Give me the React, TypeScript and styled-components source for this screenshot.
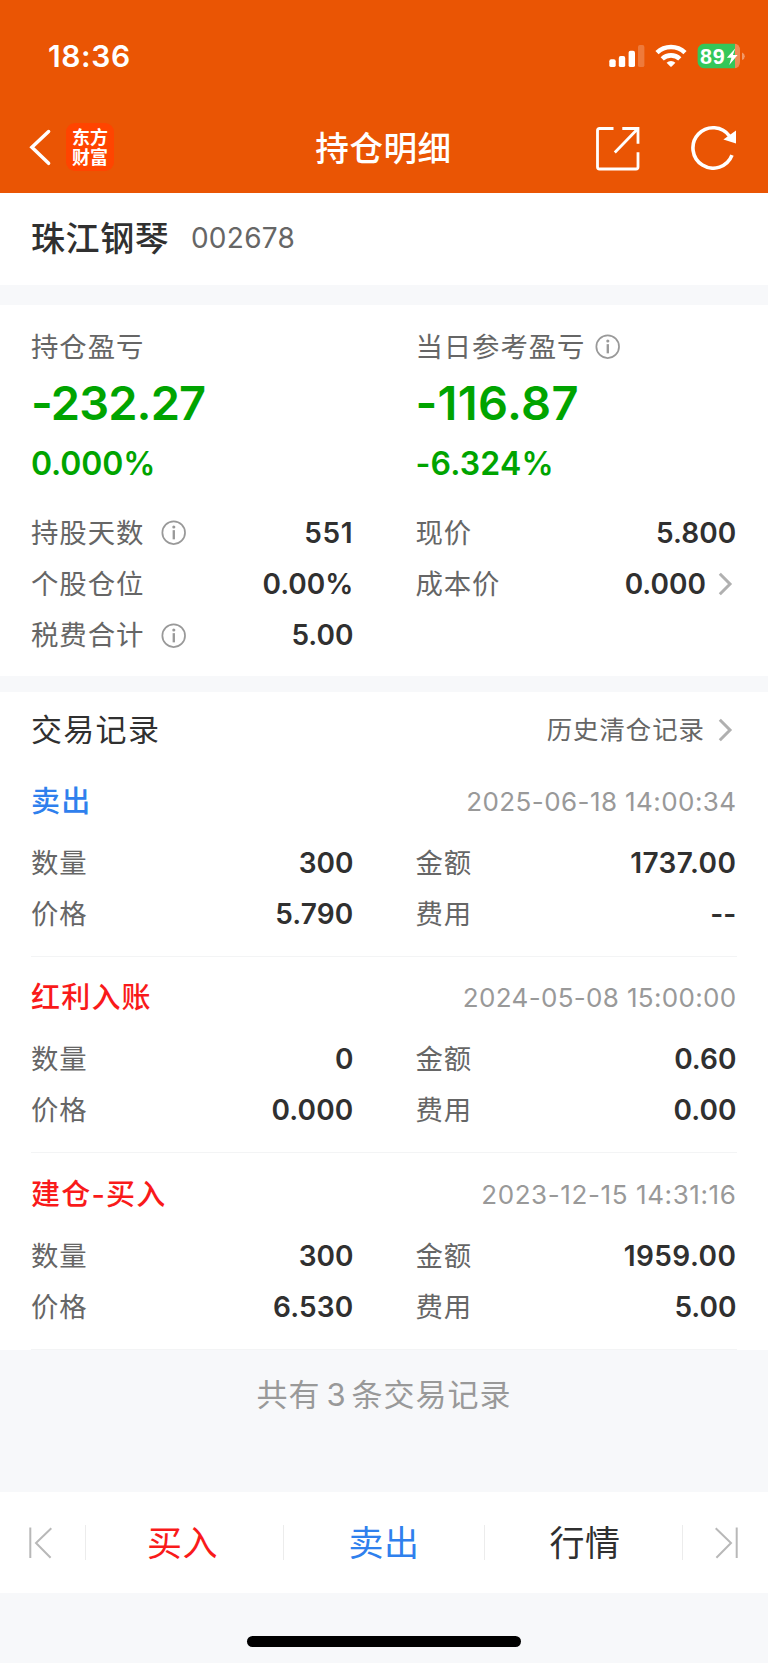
import React from "react";
import styled, { createGlobalStyle } from "styled-components";

const GlobalStyle = createGlobalStyle`
  * { box-sizing: border-box; }
  body {
    margin: 0;
    background: #f7f8fa;
    font-family: Inter, "Noto Sans CJK SC", sans-serif;
    color: #303030;
    -webkit-font-smoothing: antialiased;
  }
`;

const Page = styled.div`
  display: flex;
  flex-direction: column;
  width: 768px;
  height: 1663px;
  background: #f7f8fa;
  white-space: nowrap;
  overflow: hidden;
`;

const Header = styled.header`
  height: 192.5px;
  background: #ea5504;
  color: #fff;
`;

const StatusBar = styled.div`
  height: 102px;
  padding: 10px 24px 0 48px;
  display: flex;
  align-items: center;
  justify-content: space-between;
`;

const Clock = styled.span`
  font-size: 30px;
  font-weight: 600;
  letter-spacing: 0.6px;
`;

const NavBar = styled.nav`
  height: 90px;
  padding: 0 31px 0 28px;
  display: grid;
  grid-template-columns: 1fr auto 1fr;
  align-items: center;
`;

const NavLeft = styled.div`
  display: flex;
  align-items: center;
  gap: 12px;
`;

const NavRight = styled.div`
  display: flex;
  align-items: center;
  justify-content: flex-end;
  gap: 51px;
`;

const NavTitle = styled.h1`
  margin: 0;
  padding: 4px 0 0 2px;
  font-size: 33.6px;
  font-weight: 500;
  letter-spacing: 0.5px;
  line-height: 48px;
`;

const Logo = styled.div`
  width: 48px;
  height: 48px;
  padding: 5px 0 0 6px;
  border-radius: 9px;
  background: #ff4400;
  font-size: 18px;
  font-weight: 700;
  line-height: 19.5px;
`;

const StockBar = styled.section`
  height: 92.5px;
  padding: 0 31px;
  display: flex;
  align-items: center;
  gap: 21.5px;
  background: #fff;
`;

const StockName = styled.h2`
  margin: 0;
  font-size: 34px;
  font-weight: 500;
  letter-spacing: 0.6px;
  line-height: 50px;
`;

const StockCode = styled.span`
  padding-bottom: 1px;
  color: #666;
  font-size: 28px;
  letter-spacing: 0.3px;
  line-height: 49px;
`;

const Panel = styled.section<{ $top: number; $height: number }>`
  height: ${(p) => p.$height}px;
  margin-top: ${(p) => p.$top}px;
  padding: 0 31.5px 0 31px;
  background: #fff;
`;

const Columns = styled.div`
  display: grid;
  grid-template-columns: 322.4px 321px;
  column-gap: 62px;
`;

const Overview = styled(Columns)`
  padding: 18.5px 0 17.5px;
`;

const LabelLine = styled.div`
  height: 46px;
  display: flex;
  align-items: center;
  gap: 10px;
`;

const Amount = styled.div<{ $tracking: number }>`
  height: 68px;
  color: #00a400;
  font-size: 47px;
  font-weight: 600;
  letter-spacing: ${(p) => p.$tracking}px;
  line-height: 66px;
`;

const Percent = styled.div<{ $tracking: number }>`
  height: 52px;
  color: #00a400;
  font-size: 32px;
  font-weight: 600;
  letter-spacing: ${(p) => p.$tracking}px;
  line-height: 52px;
`;

const Field = styled.div`
  height: 51.3px;
  display: flex;
  align-items: center;
  justify-content: space-between;
`;

const FieldName = styled.span`
  display: flex;
  align-items: center;
  gap: 17px;
`;

const Label = styled.span`
  color: #666;
  font-size: 27.4px;
  letter-spacing: 0.95px;
  line-height: 40px;
`;

const Value = styled.span<{ $tracking: number }>`
  display: flex;
  align-items: center;
  font-size: 28px;
  font-weight: 600;
  letter-spacing: ${(p) => p.$tracking}px;
`;

const SectionHead = styled.div`
  height: 68px;
  padding-top: 7px;
  display: flex;
  align-items: center;
  justify-content: space-between;
`;

const SectionTitle = styled.h2`
  margin: 0;
  font-size: 31px;
  font-weight: 400;
  letter-spacing: 1.3px;
  line-height: 42px;
`;

const HistoryLink = styled.a`
  display: flex;
  align-items: center;
  color: #666;
`;

const HistoryText = styled.span`
  margin-right: 1px;
  font-size: 25.4px;
  letter-spacing: 1px;
  line-height: 36px;
`;

const Record = styled.article`
  height: 196.5px;
  padding-top: 6px;
  border-bottom: 1px solid #f3f4f5;
`;

const RecordHead = styled.div`
  height: 71px;
  display: flex;
  align-items: center;
  justify-content: space-between;
`;

const RecordType = styled.span<{ $color: string }>`
  color: ${(p) => p.$color};
  font-size: 29px;
  font-weight: 500;
  letter-spacing: 1.2px;
  line-height: 40px;
`;

const RecordTime = styled.time<{ $tracking: number }>`
  padding-bottom: 1px;
  color: #999;
  font-size: 26px;
  letter-spacing: ${(p) => p.$tracking}px;
`;

const Total = styled.p`
  height: 142.5px;
  margin: 0;
  color: #999;
  font-size: 31px;
  letter-spacing: 1px;
  line-height: 90px;
  text-align: center;
`;

const Count = styled.span`
  margin: 0 5px 0 6px;
`;

const ActionBar = styled.footer`
  height: 101px;
  display: grid;
  grid-template-columns: 86px 198px 201px 198px 85px;
  align-items: center;
  background: #fff;
`;

const Action = styled.button<{ $color: string; $nudge?: number }>`
  height: 35px;
  padding: 1px 0 0 ${(p) => p.$nudge ?? 0}px;
  border: 0;
  border-right: 1px solid #ececec;
  background: none;
  color: ${(p) => p.$color};
  font: 400 35px/35px Inter, "Noto Sans CJK SC", sans-serif;
  letter-spacing: 0.6px;
`;

const BuyAction = styled(Action)`
  padding-right: 4px;
`;

const EdgeButton = styled.button<{ $first?: boolean }>`
  height: 35px;
  padding: 0 ${(p) => (p.$first ? 33.5 : 0)}px 0 ${(p) => (p.$first ? 0 : 32)}px;
  display: flex;
  align-items: center;
  justify-content: ${(p) => (p.$first ? "flex-end" : "flex-start")};
  border: 0;
  border-right: ${(p) => (p.$first ? "1px solid #ececec" : "0")};
  background: none;
`;

const HomeArea = styled.div`
  height: 70px;
  padding-top: 43px;
  display: flex;
  justify-content: center;
`;

const HomeIndicator = styled.div`
  width: 274px;
  height: 10.5px;
  border-radius: 6px;
  background: #000;
`;

const StatusIcons = () => (
  <svg width="136" height="28" viewBox="608 42 136 28" fill="#fff" overflow="visible">
    <rect x="609.3" y="59.3" width="6.4" height="7.8" rx="1.9" />
    <rect x="618.8" y="56" width="6.4" height="11.1" rx="1.9" />
    <rect x="628.6" y="50.8" width="6.4" height="16.3" rx="1.9" />
    <rect x="638" y="45" width="6.4" height="22.1" rx="1.9" opacity="0.22" />
    <g fill="none" stroke="#fff" strokeWidth="4.6">
      <path d="M657 52.6 A20.2 20.2 0 0 1 685 52.6" />
      <path d="M662.2 58.9 A12.8 12.8 0 0 1 679.8 58.9" />
    </g>
    <path d="M666.6 62.8 A6.5 6.5 0 0 1 675.4 62.8 L671.7 66.5 Q671 67.1 670.3 66.5 Z" />
    <path d="M735 43.8 A5 6.2 0 0 1 740 50 V62 A5 6.2 0 0 1 735 68.2 Z" opacity="0.32" />
    <path d="M704 43.8 H735 V68.2 H704 A6.4 6.4 0 0 1 697.6 61.8 V50.2 A6.4 6.4 0 0 1 704 43.8 Z" fill="#34c759" />
    <path d="M742 52.4 Q744.8 53.4 744.8 56.2 Q744.8 59 742 60 Z" opacity="0.4" />
    <text x="700" y="63.7" fontSize="21.5" fontWeight="700" fontFamily="Liberation Sans, sans-serif" letterSpacing="0.9">
      89
    </text>
    <path d="M735.2 48.6 L726.8 57.8 H731.4 L729.2 65 L737.6 55 H732.9 Z" />
  </svg>
);

const BackIcon = () => (
  <svg width="26" height="40" viewBox="28 127 26 40" fill="none" stroke="#fff" strokeWidth="3.5" strokeLinecap="round">
    <path d="M48.6 131.5 L31.9 147.3 L48.6 163.3" />
  </svg>
);

const ShareIcon = () => (
  <svg width="44" height="48" viewBox="0 -4 44 48" fill="none" stroke="#fff" strokeWidth="2.8">
    <path d="M17.5 1.5 H3.5 Q1.5 1.5 1.5 3.5 V40 Q1.5 42 3.5 42 H40 Q42 42 42 40 V25.2" />
    <path d="M26.3 1.5 H42 V16.8 M42 1.5 L18.8 25.4" />
  </svg>
);

const RefreshIcon = () => (
  <svg width="46" height="46" viewBox="691 125 46 46">
    <path d="M732 156.2 A20.2 20.2 0 1 1 729.6 137.2" fill="none" stroke="#fff" strokeWidth="3.6" />
    <path d="M736 131.5 V144.6 L723.4 140.4 Z" fill="#fff" />
  </svg>
);

const InfoIcon = () => (
  <svg width="25.4" height="25.4" viewBox="0 0 26 26">
    <circle cx="13" cy="13" r="11.6" fill="none" stroke="#999" strokeWidth="1.8" />
    <rect x="11.9" y="10.4" width="2.4" height="9.4" fill="#999" />
    <circle cx="13.1" cy="7.2" r="1.6" fill="#999" />
  </svg>
);

const ArrowSlot = styled.svg`
  margin: 0 3.5px 0 12px;
`;

const Arrow = () => (
  <ArrowSlot width="15" height="24" viewBox="0 0 15 24" fill="none" stroke="#b0b0b0" strokeWidth="3">
    <path d="M1.8 1.8 L12 12 L1.8 22.2" />
  </ArrowSlot>
);

const EdgeIcon = ({ flip }: { flip?: boolean }) => (
  <svg width="23" height="32" viewBox="0 0 23 32" fill="none" stroke="#b8b8b8" strokeWidth="2">
    <g transform={flip ? "translate(23 0) scale(-1 1)" : undefined}>
      <path d="M1.3 0.5 V31" />
      <path d="M22.3 1.2 L7 16 L21.6 30.8" />
    </g>
  </svg>
);

type FieldProps = { name: string; value: string; info?: boolean; arrow?: boolean; tracking?: number };

const FieldRow = ({ name, value, info, arrow, tracking = 0 }: FieldProps) => (
  <Field>
    <FieldName>
      <Label>{name}</Label>
      {info && <InfoIcon />}
    </FieldName>
    <Value $tracking={tracking}>
      {value}
      {arrow && <Arrow />}
    </Value>
  </Field>
);

const records = [
  { type: "卖出", color: "#2f80ed", time: "2025-06-18 14:00:34", tracking: 0.42, count: "300", amount: "1737.00", price: "5.790", fee: "--" },
  { type: "红利入账", color: "#f91a1a", time: "2024-05-08 15:00:00", tracking: 0.33, count: "0", amount: "0.60", price: "0.000", fee: "0.00" },
  { type: "建仓-买入", color: "#f91a1a", time: "2023-12-15 14:31:16", tracking: 0.6, count: "300", amount: "1959.00", price: "6.530", fee: "5.00" },
];

export default function App() {
  return (
    <Page>
      <GlobalStyle />
      <Header>
        <StatusBar>
          <Clock>18:36</Clock>
          <StatusIcons />
        </StatusBar>
        <NavBar>
          <NavLeft>
            <BackIcon />
            <Logo>
              东方
              <br />
              财富
            </Logo>
          </NavLeft>
          <NavTitle>持仓明细</NavTitle>
          <NavRight>
            <ShareIcon />
            <RefreshIcon />
          </NavRight>
        </NavBar>
      </Header>

      <StockBar>
        <StockName>珠江钢琴</StockName>
        <StockCode>002678</StockCode>
      </StockBar>

      <Panel $top={20} $height={371}>
        <Overview>
          <div>
            <LabelLine>
              <Label>持仓盈亏</Label>
            </LabelLine>
            <Amount $tracking={-0.9}>-232.27</Amount>
            <Percent $tracking={-0.1}>0.000%</Percent>
          </div>
          <div>
            <LabelLine>
              <Label>当日参考盈亏</Label>
              <InfoIcon />
            </LabelLine>
            <Amount $tracking={0.35}>-116.87</Amount>
            <Percent $tracking={0.2}>-6.324%</Percent>
          </div>
        </Overview>
        <Columns>
          <FieldRow name="持股天数" value="551" tracking={0.7} info />
          <FieldRow name="现价" value="5.800" tracking={0.1} />
          <FieldRow name="个股仓位" value="0.00%" />
          <FieldRow name="成本价" value="0.000" arrow />
          <FieldRow name="税费合计" value="5.00" info />
        </Columns>
      </Panel>

      <Panel $top={16} $height={657.5}>
        <SectionHead>
          <SectionTitle>交易记录</SectionTitle>
          <HistoryLink>
            <HistoryText>历史清仓记录</HistoryText>
            <Arrow />
          </HistoryLink>
        </SectionHead>
        {records.map((r) => (
          <Record key={r.time}>
            <RecordHead>
              <RecordType $color={r.color}>{r.type}</RecordType>
              <RecordTime $tracking={r.tracking}>{r.time}</RecordTime>
            </RecordHead>
            <Columns>
              <FieldRow name="数量" value={r.count} />
              <FieldRow name="金额" value={r.amount} tracking={r.amount.startsWith("1") ? 0.45 : 0} />
              <FieldRow name="价格" value={r.price} tracking={0.15} />
              <FieldRow name="费用" value={r.fee} />
            </Columns>
          </Record>
        ))}
      </Panel>

      <Total>
        共有<Count>3</Count>条交易记录
      </Total>

      <ActionBar>
        <EdgeButton $first aria-label="上一只">
          <EdgeIcon />
        </EdgeButton>
        <BuyAction $color="#f91a1a">买入</BuyAction>
        <Action $color="#2f80ed">卖出</Action>
        <Action $color="#303030" $nudge={3}>
          行情
        </Action>
        <EdgeButton aria-label="下一只">
          <EdgeIcon flip />
        </EdgeButton>
      </ActionBar>

      <HomeArea>
        <HomeIndicator />
      </HomeArea>
    </Page>
  );
}
